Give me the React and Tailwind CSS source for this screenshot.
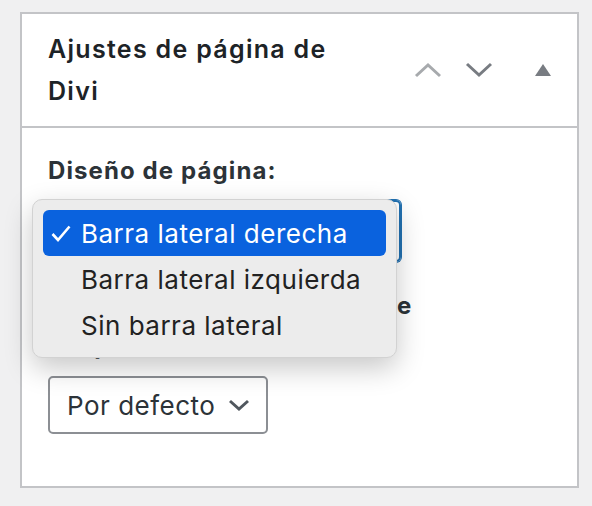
import React from 'react';

const font = { fontFamily: 'Inter, "Noto Sans", sans-serif' };

const ChevronUp = () => (
  <svg width="28" height="16" viewBox="0 0 28 16" fill="none">
    <polyline points="2,14 14,3 26,14" stroke="#a7aaad" strokeWidth="3" />
  </svg>
);

const ChevronDown = () => (
  <svg width="28" height="16" viewBox="0 0 28 16" fill="none">
    <polyline points="2,2 14,13 26,2" stroke="#787c82" strokeWidth="3" />
  </svg>
);

const Triangle = () => (
  <svg width="16" height="12" viewBox="0 0 16 12">
    <polygon points="8,0 16,12 0,12" fill="#787c82" />
  </svg>
);

const Check = () => (
  <svg width="20" height="17" viewBox="0 0 20 17" fill="none">
    <polyline points="1.5,9 7,15 18.5,1.5" stroke="#fff" strokeWidth="2.6" />
  </svg>
);

const options = ['Barra lateral derecha', 'Barra lateral izquierda', 'Sin barra lateral'];

const App = () => {
  return (
    <div className="h-[506px] w-[592px] bg-[#f0f0f1] pt-[12px] pl-[20px]" style={font}>
      <div className="w-[559px] h-[476px] border-2 border-[#c3c4c7] bg-white">

        <div className="h-[114px] flex items-center justify-between pl-[26px] pr-[26px] border-b-2 border-[#c3c4c7]">
          <h2 className="w-[310px] text-[25px] leading-[42px] font-semibold tracking-[1.3px] text-[#1d2327]">
            Ajustes de página de Divi
          </h2>
          <div className="flex items-center">
            <ChevronUp />
            <span className="ml-[23px]"><ChevronDown /></span>
            <span className="ml-[42px]"><Triangle /></span>
          </div>
        </div>

        <div className="relative pt-[28px] pl-[26px]">
          <div className="text-[24px] leading-[30px] font-bold tracking-[1.1px] text-[#2c3338]">Diseño de página:</div>

          <div className="mt-[14px] w-[353px] h-[62px] rounded-[5px] border-2 border-[#2271b1] shadow-[0_0_0_1px_#2271b1]" />

          <div className="mt-[24px] w-[390px] text-[24px] leading-[40px] font-bold tracking-[1.1px] text-[#2c3338]">
            Ocultar navegación antes de desplazarse:
          </div>

          <div className="mt-[10px] w-[220px] h-[58px] rounded-[5px] border-2 border-[#8c8f94] flex items-center justify-between pl-[17px] pr-[16px] text-[26px] tracking-[0.5px] text-[#2c3338]">
            <span>Por defecto</span>
            <svg width="22" height="12" viewBox="0 0 22 12" fill="none">
              <polyline points="2,2 11,10 20,2" stroke="#50575e" strokeWidth="3" />
            </svg>
          </div>

          {/* native select popup */}
          <div className="absolute left-[10px] top-[71px] w-[365px] h-[159px] rounded-[10px] border border-[#d2d2d2] bg-[#ececec] shadow-[0_10px_28px_rgba(0,0,0,0.22)] px-[10px] pt-[10px]">
            {options.map((o, i) => (
              <div
                key={o}
                className={
                  'h-[46px] flex items-center rounded-[6px] text-[26px] tracking-[0.5px] ' +
                  (i === 0 ? 'bg-[#0a62de] text-white' : 'text-[#222222]')
                }
              >
                <span className="w-[38px] flex justify-end pr-[10px]">{i === 0 && <Check />}</span>
                <span>{o}</span>
              </div>
            ))}
          </div>
        </div>

      </div>
    </div>
  );
};

export default App;
